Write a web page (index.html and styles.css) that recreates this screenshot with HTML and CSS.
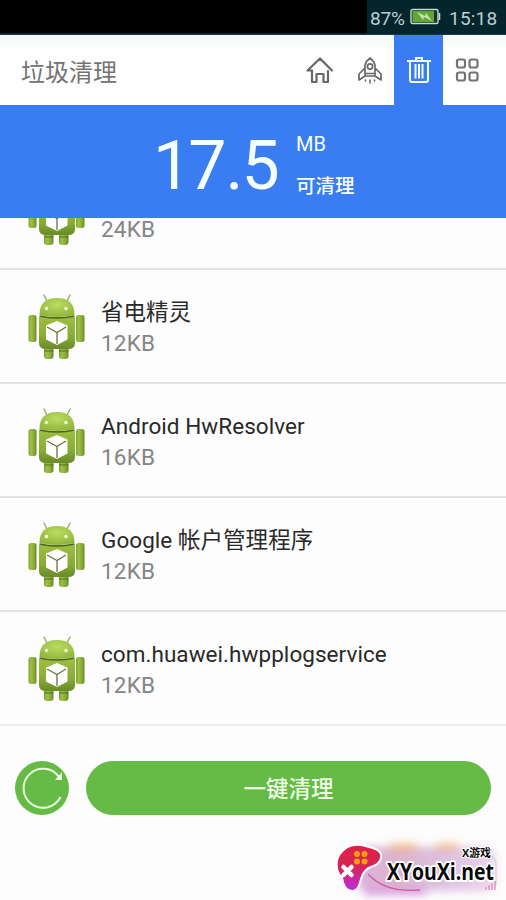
FILE: index.html
```html
<!DOCTYPE html>
<html lang="zh-CN">
<head>
<meta charset="utf-8">
<title>垃圾清理</title>
<link rel="stylesheet" href="styles.css">
</head>
<body>
<svg class="defs" width="0" height="0" aria-hidden="true">
  <defs>
    <linearGradient id="metal" x1="0" x2="1" y1="0" y2="0"><stop offset="0" stop-color="#7d9f38"/><stop offset=".3" stop-color="#9dc143"/><stop offset=".7" stop-color="#87aa36"/><stop offset="1" stop-color="#658728"/></linearGradient>
    <linearGradient id="trunk" x1="0" x2="0" y1="0" y2="1"><stop offset="0" stop-color="#9dbf40"/><stop offset=".6" stop-color="#88ac35"/><stop offset="1" stop-color="#688a29"/></linearGradient>
    <radialGradient id="dome" cx=".5" cy=".35" r=".65"><stop offset="0" stop-color="#bcdc60"/><stop offset="1" stop-color="#90b63b"/></radialGradient>
    <symbol id="robot" viewBox="0 0 60 70">
      <path d="M16 3l4 8M42 3l-4 8" stroke="#9baf78" stroke-width="1.500" stroke-linecap="round"/>
      <rect x="16" y="51" width="9.500" height="16" rx="3" fill="url(#metal)"/>
      <rect x="31" y="51" width="9.500" height="16" rx="3" fill="url(#metal)"/>
      <path d="M16 59h9.500M31 59h9.500" stroke="#53701f" stroke-width="2" opacity=".5"/>
      <rect x=".5" y="23" width="8" height="27" rx="2.500" fill="url(#metal)"/>
      <rect x="48" y="23" width="8.500" height="27" rx="2.500" fill="url(#metal)"/>
      <path d="M11 25h36v26q0 6-7 6H18q-7 0-7-6z" fill="url(#trunk)"/>
      <path d="M11.500 23q0-17 17.500-17t17.500 17q-17 4-35 0z" fill="url(#dome)"/>
      <path d="M11.500 24q17.500 4 35 0" fill="none" stroke="#4b651c" stroke-width="1.600"/>
      <circle cx="18.500" cy="16.500" r="1.700" fill="#f5ffe3"/><circle cx="38" cy="16.500" r="1.700" fill="#f5ffe3"/>
      <path d="M29 29l10.500 4.500v14L29 53l-11-5.500v-14z" fill="#fff"/>
      <path d="M19 35l10 5.500 9-5.500M29 40.500V52" fill="none" stroke="#65743f" stroke-width="1.300"/>
    </symbol>
  </defs>
</svg>
<main class="screen">
  <div class="status">
    <div class="mask"></div>
    <span class="percent">87%</span>
    <svg class="battery" width="31" height="18" viewBox="0 0 31 18"><rect x="1" y="1.500" width="27" height="14" rx="1.500" fill="#17352f" stroke="#c2dcca" stroke-width="1.400"/><path d="M2.500 3H24v11H2.500z" fill="#62a735"/><path d="M29.500 5v7" stroke="#c2dcca" stroke-width="1.500"/><path d="M7 4l8 4 1-3 6 8-8-4-1 3z" fill="#c3dfb4"/></svg>
    <time class="clock">15:18</time>
  </div>
  <header class="header">
    <h1>垃圾清理</h1>
    <nav class="tabs">
      <a class="tab"><svg width="30" height="30" viewBox="0 0 30 30" fill="none" stroke="#686868" stroke-width="2.200" stroke-linejoin="round" stroke-linecap="round"><path d="M2.500 15.500L15 3.500l12 12M2.500 15.500H7v11.500h4.500v-8h7v8H23V16"/></svg></a>
      <a class="tab"><svg width="30" height="30" viewBox="0 0 30 30" fill="none" stroke="#696969" stroke-width="1.700" stroke-linejoin="round" stroke-linecap="round"><path d="M10 21V10q1-4 5-7 4 3 5 7v11zM10 13l-6 6v6l6-4M20 13l6 6v6l-6-4M10 18.500h10"/><circle cx="15" cy="11.500" r="2.600"/><path d="M10.500 25v1M15 25v3M19.500 25v1" stroke-width="1.600"/></svg></a>
      <a class="tab active"><svg width="30" height="30" viewBox="0 0 30 30" fill="none" stroke="#f3fcff" stroke-width="2"><path d="M3 6h24M12 5V3h6v2M6 6v19q0 2 2 2h14q2 0 2-2V6M11.500 9v14.500M15 9v14.500M18.500 9v14.500"/></svg></a>
      <a class="tab"><svg width="30" height="30" viewBox="0 0 30 30" fill="none" stroke="#737373" stroke-width="2.200"><rect x="4" y="4.500" width="8" height="8" rx="2"/><rect x="16.500" y="4.500" width="8" height="8" rx="2"/><rect x="4" y="17.500" width="8" height="8" rx="2"/><rect x="16.500" y="17.500" width="8" height="8" rx="2"/></svg></a>
    </nav>
  </header>
  <section class="summary">
    <strong>17<span class="point">.</span>5</strong>
    <div class="unit"><span class="mb">MB</span><span class="label">可清理</span></div>
  </section>
  <ul class="apps">
    <li><svg class="app-icon"><use href="#robot"/></svg><div class="info"><span class="name"></span><span class="size">24KB</span></div></li>
    <li><svg class="app-icon"><use href="#robot"/></svg><div class="info"><span class="name">省电精灵</span><span class="size">12KB</span></div></li>
    <li><svg class="app-icon"><use href="#robot"/></svg><div class="info"><span class="name">Android HwResolver</span><span class="size">16KB</span></div></li>
    <li><svg class="app-icon"><use href="#robot"/></svg><div class="info"><span class="name">Google 帐户管理程序</span><span class="size">12KB</span></div></li>
    <li><svg class="app-icon"><use href="#robot"/></svg><div class="info"><span class="name">com.huawei.hwpplogservice</span><span class="size">12KB</span></div></li>
  </ul>
  <footer class="actions">
    <button class="refresh" aria-label="刷新"><svg width="54" height="54" viewBox="0 0 54 54" fill="none" stroke="#e9ffe0" stroke-width="2"><path d="M45.500 36A19.500 19.500 0 1 1 44 16"/><path d="M47 11v8h-7z" fill="#e9ffe0" stroke="none"/></svg></button>
    <button class="clean">一键清理</button>
  </footer>
  <div class="watermark">
    <svg width="176" height="66" viewBox="0 0 176 66">
      <defs>
        <linearGradient id="pad" x1="0" y1="0" x2="0" y2="1"><stop offset="0" stop-color="#df2147"/><stop offset=".45" stop-color="#d52552"/><stop offset="1" stop-color="#bf2bea"/></linearGradient>
        <linearGradient id="haze" x1="0" x2="1"><stop offset="0" stop-color="#d9b3df"/><stop offset=".3" stop-color="#ddb3ca"/><stop offset=".65" stop-color="#dcc2e2"/><stop offset="1" stop-color="#f0d3eb"/></linearGradient>
        <filter id="soft" x="-30%" y="-50%" width="160%" height="200%"><feGaussianBlur stdDeviation="4"/></filter>
      </defs>
      <g filter="url(#soft)"><rect x="26" y="13" width="140" height="44" rx="12" fill="url(#haze)"/><path d="M60 13h26M106 13h22" stroke="#f0b879" stroke-width="6"/><path d="M34 58h62" stroke="#d697e0" stroke-width="6"/></g>
      <path d="M38 40q17 19 52 16" fill="none" stroke="#d45c9e" stroke-width="1.300"/>
      <path d="M157 21q8 1 9 8v22" fill="none" stroke="#d9c9dd"/>
      <path d="M156 56v-3M159 56v-5M162 56v-7M165 56v-9" stroke="#d76dab" stroke-width="1"/>
      <path d="M16 14q9-6 23-1 14 3 12 11-1 6-10 9-7 2-10 12-3 13-9 12-8 0-10-13-7-8-5-17 1-7 9-13z" fill="url(#pad)" stroke="#fff" stroke-width="2"/>
      <g fill="#ff9d16"><circle cx="27" cy="20" r="3"/><circle cx="34.500" cy="20" r="3"/><circle cx="27" cy="27.500" r="3"/><circle cx="34.500" cy="27.500" r="3"/></g>
      <path d="M13.500 33l8 8M21.500 33l-8 8" stroke="#fff" stroke-width="4.500" stroke-linecap="round"/>
      <text class="brand" x="57" y="46" textLength="107" lengthAdjust="spacingAndGlyphs">XYouXi.net</text>
      <text class="brand-cn" x="132" y="22.500" textLength="29" lengthAdjust="spacingAndGlyphs">X游戏</text>
    </svg>
  </div>
</main>
</body>
</html>
```
FILE: styles.css
```css
* { box-sizing: border-box; }
body { margin: 0; font-family: Roboto, "Noto Sans CJK SC", sans-serif; background: #fdfdfd; }
.defs { position: absolute; }
.screen { position: relative; width: 506px; height: 900px; overflow: hidden; background: #fdfdfd; }
.status { height: 35px; display: flex; align-items: center; background: #05252d; border-bottom: 1px solid #18373e; color: #b9cfd1; }
.mask { width: 367px; height: 33px; align-self: flex-start; background: #000; }
.percent { width: 37px; margin: 2px 0 0 3px; font-size: 19px; letter-spacing: -.2px; }
.battery { margin-left: 3px; }
.clock { margin: 2px 0 0 8px; font-size: 19px; letter-spacing: .2px; }
.header { height: 70px; display: flex; justify-content: space-between; align-items: center; background: linear-gradient(#f3f8f8, #fefefe 14px); }
.header h1 { margin: 6px 0 0 21px; font-size: 24px; font-weight: 400; line-height: 36px; color: #737373; }
.tabs { display: flex; align-self: stretch; padding-right: 14px; }
.tab { width: 49px; display: flex; align-items: center; justify-content: center; }
.tab:first-child { width: 50px; }
.tab svg { display: block; }
.tab.active { background: #3a7cf1; }
.summary { height: 113px; display: flex; padding-left: 153px; background: #3a7cf1; color: #f5ffff; }
.summary strong { width: 128px; margin-top: 21px; font-size: 68px; line-height: 80px; font-weight: 400; letter-spacing: -3px; }
.point { margin: 0 1px 0 2px; }
.unit { display: flex; flex-direction: column; margin-left: 15px; padding-top: 26px; }
.mb { font-size: 20px; line-height: 27px; }
.label { margin-top: 14px; font-size: 19.500px; line-height: 30px; font-weight: 500; }
.apps { height: 508px; margin: 0; padding: 0; overflow: hidden; list-style: none; }
.apps li { height: 114px; display: flex; align-items: flex-start; padding: 22px 0 0 28px; border-bottom: 2px solid #e2e2e2; }
.apps li:first-child { margin-top: -62px; }
.apps li:last-child { border-bottom-color: #eeeeee; }
.app-icon { width: 60px; height: 70px; flex: none; }
.info { display: flex; flex-direction: column; margin-left: 13px; padding-top: 4px; }
.name { height: 32px; font-size: 22.500px; line-height: 32px; color: #292929; white-space: nowrap; letter-spacing: .05px; }
.size { font-size: 22.500px; line-height: 30px; color: #858585; letter-spacing: .2px; }
.actions { display: flex; gap: 17px; padding: 35px 15px 0; }
.actions button { height: 54px; padding: 0; border: 0; background: #65bb45; }
.refresh { width: 54px; flex: none; border-radius: 50%; }
.refresh svg { display: block; }
.clean { flex: 1; border-radius: 27px; color: #f0ffe9; }
.actions .clean { padding-top: 3px; font: 500 22.500px/51px Roboto, "Noto Sans CJK SC", sans-serif; }
.watermark { position: absolute; left: 330px; top: 834px; width: 176px; height: 66px; }
.brand, .brand-cn { fill: #090909; stroke: #fff; stroke-width: 4px; stroke-linejoin: round; paint-order: stroke; font-family: "Open Sans", "Noto Sans CJK SC", sans-serif; font-weight: 700; }
.brand { font-size: 24px; }
.brand-cn { font-size: 11px; stroke-width: 2px; }
```
